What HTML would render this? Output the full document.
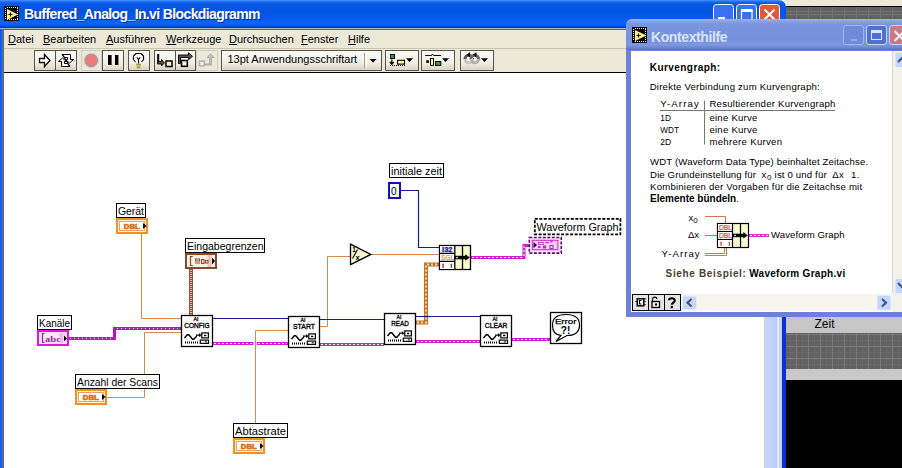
<!DOCTYPE html>
<html><head><meta charset="utf-8">
<style>
*{margin:0;padding:0;box-sizing:border-box}
html,body{width:902px;height:468px;overflow:hidden;background:#fff;font-family:"Liberation Sans",sans-serif}
.a{position:absolute}
#fp{left:786px;top:0;width:116px;height:468px;background:#000}
#title{left:0;top:0;width:786px;height:28px;border-radius:0 7px 0 0;background:linear-gradient(#4a98ff 0,#2c7af6 1px,#0a5ae6 3px,#0054e0 10px,#0658ea 18px,#0c66f8 23px,#0a5cf0 25px,#0044cc 27px,#0038b0 28px)}
#ttext{left:24px;top:6px;color:#fff;font-weight:bold;font-size:14px;letter-spacing:-0.62px;white-space:nowrap;text-shadow:1px 1px 0 #0a2a9a}
#frameL{left:0;top:29px;width:4px;height:440px;background:linear-gradient(90deg,#0d5ef0 0,#0d5ef0 2px,#4a78c8 2px,#6a6a60 3px)}
#frameR{left:782px;top:29px;width:4px;height:440px;background:#0c30d0}
#menubar{left:0;top:28px;width:786px;height:20px;background:#ece9d8;border-top:1px solid #a4acc8;box-shadow:inset 0 1px 0 #6e685a}
#menubar span{position:absolute;top:4px;font-size:11px;color:#000}
#toolbar{left:4px;top:48px;width:778px;height:25px;background:#ece9d8;border-top:1px solid #c9c6b4;border-bottom:1px solid #000}
#canvas{left:4px;top:73px;width:760px;height:395px;background:#fff}
#vscroll{left:764px;top:73px;width:18px;height:395px;background:linear-gradient(90deg,#c8d0e8 0,#c8d0e8 1px,#c6d6fa 1px,#bccdf6 13px,#eef3ff 14px,#eef3ff 15px,#c0d0f8 15px)}
#help{left:626px;top:19px;width:290px;height:298px;background:#7c96df;border-radius:7px 7px 0 0}
#hcontent{left:631px;top:51px;width:280px;height:261px;background:#fff}
</style></head><body>
<div id="fp" class="a"></div>
<div class="a" style="left:786px;top:0;width:116px;height:6px;background:#ece9d8"></div>
<div class="a" style="left:786px;top:6px;width:116px;height:1px;background:#000"></div>
<svg class="a" style="left:786px;top:7px" width="116" height="461">
<defs><pattern id="grid" x="10" y="0" width="12" height="12" patternUnits="userSpaceOnUse"><rect width="12" height="12" fill="#626262"/><path d="M0.5 0 V12 M0 4.5 H12 M0 7.5 H12" stroke="#747474" stroke-width="1"/></pattern>
<pattern id="grid2" x="10" y="3" width="12" height="12" patternUnits="userSpaceOnUse"><rect width="12" height="12" fill="#626262"/><path d="M6.5 0 V12 M0 6.5 H12" stroke="#6a6a6a" stroke-width="1"/><path d="M0.5 0 V12 M0 0.5 H12" stroke="#7a7a7a" stroke-width="1"/></pattern></defs>
<rect x="0" y="0" width="116" height="20" fill="url(#grid)"/>
<rect x="0" y="310" width="116" height="16" fill="#c6c6c6"/>
<text x="28.5" y="321" font-family="Liberation Sans" font-size="12" fill="#000">Zeit</text>
<rect x="0" y="326" width="116" height="36" fill="url(#grid2)"/>
<rect x="0" y="362" width="116" height="11" fill="#c8c8c8"/>
<rect x="0" y="373" width="116" height="88" fill="#000"/>
</svg>

<div id="title" class="a"></div>
<svg class="a" style="left:0;top:0" width="790" height="28">
<rect x="4" y="6" width="15" height="15" fill="#000"/>
<rect x="7" y="7" width="1" height="1" fill="#f0f0f0"/><rect x="7" y="19" width="1" height="1" fill="#f0f0f0"/><rect x="9" y="7" width="1" height="1" fill="#f0f0f0"/><rect x="9" y="19" width="1" height="1" fill="#f0f0f0"/><rect x="11" y="7" width="1" height="1" fill="#f0f0f0"/><rect x="11" y="19" width="1" height="1" fill="#f0f0f0"/><rect x="13" y="7" width="1" height="1" fill="#f0f0f0"/><rect x="13" y="19" width="1" height="1" fill="#f0f0f0"/><rect x="15" y="7" width="1" height="1" fill="#f0f0f0"/><rect x="15" y="19" width="1" height="1" fill="#f0f0f0"/><rect x="17" y="7" width="1" height="1" fill="#f0f0f0"/><rect x="17" y="19" width="1" height="1" fill="#f0f0f0"/><rect x="5" y="8" width="1" height="1" fill="#f0f0f0"/><rect x="17" y="8" width="1" height="1" fill="#f0f0f0"/><rect x="5" y="10" width="1" height="1" fill="#f0f0f0"/><rect x="17" y="10" width="1" height="1" fill="#f0f0f0"/><rect x="5" y="12" width="1" height="1" fill="#f0f0f0"/><rect x="17" y="12" width="1" height="1" fill="#f0f0f0"/><rect x="5" y="14" width="1" height="1" fill="#f0f0f0"/><rect x="17" y="14" width="1" height="1" fill="#f0f0f0"/><rect x="5" y="16" width="1" height="1" fill="#f0f0f0"/><rect x="17" y="16" width="1" height="1" fill="#f0f0f0"/><rect x="5" y="18" width="1" height="1" fill="#f0f0f0"/><rect x="17" y="18" width="1" height="1" fill="#f0f0f0"/>
<path d="M7 9 L18 14.5 L7 20 Z" fill="#f8f088"/>
<path d="M8.5 14.5 H12.5 M10.5 12.5 V16.5" stroke="#000" stroke-width="1.1"/>
<g stroke="#fff" stroke-width="1">
<rect x="713.5" y="4.5" width="20" height="20" rx="3" fill="#3a70f4"/>
<rect x="736.5" y="4.5" width="20" height="20" rx="3" fill="#3a70f4"/>
<rect x="759.5" y="4.5" width="20" height="20" rx="3" fill="#e05a3a"/>
</g>
<rect x="718" y="17" width="7" height="2.5" fill="#fff"/>
<path d="M741.5 10.5 H752 V22 H741.5 Z" fill="none" stroke="#fff" stroke-width="1.2"/>
<rect x="741" y="9" width="11.5" height="3" fill="#fff"/>
<path d="M764.5 9.5 L774.5 19.5 M774.5 9.5 L764.5 19.5" stroke="#fff" stroke-width="2"/>
</svg>
<div id="ttext" class="a">Buffered_Analog_In.vi Blockdiagramm</div>
<div id="menubar" class="a">
<span style="left:8px"><u>D</u>atei</span>
<span style="left:43px"><u>B</u>earbeiten</span>
<span style="left:106px"><u>A</u>usführen</span>
<span style="left:166px"><u>W</u>erkzeuge</span>
<span style="left:229px"><u>D</u>urchsuchen</span>
<span style="left:301px"><u>F</u>enster</span>
<span style="left:348px"><u>H</u>ilfe</span>
</div>
<div id="toolbar" class="a"></div>
<div id="frameL" class="a"></div>
<div id="frameR" class="a"></div>
<div id="canvas" class="a"></div>
<div id="vscroll" class="a"></div>
<svg class="a" style="left:0;top:0" width="902" height="468" id="diag" font-family="Liberation Sans">
<defs>
<symbol id="aiw" viewBox="0 0 32 32" width="32" height="32">
<path d="M3.5 23 L6.3 19.8 L7.8 19.8 L11.5 24.3 L12.8 24.3 L15.8 21" fill="none" stroke="#000" stroke-width="1.4"/>
<path d="M15 20.2 H20.2 M18.7 18.6 V21.8" stroke="#000" stroke-width="1.2"/>
<rect x="20.8" y="17.9" width="6.6" height="5" fill="#fff" stroke="#000" stroke-width="1.2"/>
<rect x="23" y="19.8" width="2.3" height="1.4" fill="#000"/>
<rect x="19.3" y="25.1" width="8.2" height="3.3" fill="#fff" stroke="#000" stroke-width="1.2"/>
<rect x="23.8" y="26.4" width="2.2" height="0.9" fill="#000"/>
<rect x="4" y="26.5" width="1" height="2" fill="#000"/><rect x="6" y="26.5" width="1" height="2" fill="#000"/><rect x="8" y="26.5" width="1" height="2" fill="#000"/><rect x="10" y="26.5" width="1" height="2" fill="#000"/><rect x="12" y="26.5" width="1" height="2" fill="#000"/><rect x="14" y="26.5" width="1" height="2" fill="#000"/><rect x="16" y="26.5" width="1" height="2" fill="#000"/>
</symbol>
</defs>
<!-- wires -->
<g fill="none" stroke-linecap="butt" stroke-linejoin="miter">
<path d="M141.5 234 V318.5 H181" stroke="#d98a48" stroke-width="1"/>
<path d="M107 397.5 H144.5 V332.5 H181" stroke="#d98a48" stroke-width="1"/>
<path d="M255.5 438 V330.5 H288" stroke="#d98a48" stroke-width="1"/>
<path d="M320 326.5 H327.5 V256.5 H350.5" stroke="#d98a48" stroke-width="1"/>
<path d="M371 254.5 H439" stroke="#d98a48" stroke-width="1"/>
<path d="M213 318.5 H288" stroke="#1c1c8c" stroke-width="1.2"/>
<path d="M320 319.5 H384" stroke="#1c1c8c" stroke-width="1.2"/>
<path d="M416 316.5 H480" stroke="#1c1c8c" stroke-width="1.2"/>
<path d="M401 190.5 H418.5 V247.5 H439" stroke="#1c1c8c" stroke-width="1.2"/>
<!-- string beaded -->
<path d="M69 338.5 H114.5 V328.5 H181" stroke="#b414c4" stroke-width="3"/>
<path d="M70 338.5 H113" stroke="#fff" stroke-width="1" stroke-dasharray="1 3"/>
<path d="M117 328.5 H180" stroke="#fff" stroke-width="1" stroke-dasharray="1 3"/>
<!-- task wires -->
<path d="M213 343.5 H253.5 M257 343.5 H288" stroke="#d21ed2" stroke-width="3"/>
<path d="M320 344.5 H384" stroke="#d21ed2" stroke-width="3"/>
<path d="M416 341.5 H480" stroke="#d21ed2" stroke-width="3"/>
<path d="M512 339.5 H550" stroke="#d21ed2" stroke-width="3"/>
<path d="M471 257.5 H524 V245.5 H529" stroke="#d21ed2" stroke-width="3"/>
<g stroke="#fff" stroke-width="1" stroke-dasharray="2 2">
<path d="M214 343.5 H253 M258 343.5 H287"/>
<path d="M321 344.5 H383"/>
<path d="M417 341.5 H479"/>
<path d="M513 339.5 H549"/>
<path d="M472 257.5 H524 M524 256 V245"/>
</g>
<!-- brown cluster wire -->
<path d="M191 268 V316" stroke="#9a5038" stroke-width="4"/>
<path d="M191 268 V316" stroke="#f0e0d8" stroke-width="1.5" stroke-dasharray="1 1"/>
<!-- orange array striped -->
<path d="M416 322.5 H426 V264.5 H439" stroke="#c87028" stroke-width="4"/>
<path d="M417 322.5 H426 V264.5 H438" stroke="#f8dca0" stroke-width="2" stroke-dasharray="2 2"/>
<path d="M422 316.5 H430" stroke="#1c1c8c" stroke-width="1.2"/>
</g>
<!-- AI nodes -->
<g>
<rect x="181.5" y="315.5" width="31" height="31" fill="#fff" stroke="#000" stroke-width="1.3"/>
<use href="#aiw" x="181.0" y="315.0"/>
<text x="193.6" y="321.2" font-size="6" stroke="#000" stroke-width="0.3" textLength="5" lengthAdjust="spacingAndGlyphs">AI</text>
<text x="184.2" y="328.3" font-size="7.6" stroke="#000" stroke-width="0.35" textLength="25.5" lengthAdjust="spacingAndGlyphs">CONFIG</text>
<rect x="288.5" y="316.5" width="31" height="31" fill="#fff" stroke="#000" stroke-width="1.3"/>
<use href="#aiw" x="288.0" y="316.0"/>
<text x="300.6" y="322.2" font-size="6" stroke="#000" stroke-width="0.3" textLength="5" lengthAdjust="spacingAndGlyphs">AI</text>
<text x="293.0" y="329.3" font-size="7.6" stroke="#000" stroke-width="0.35" textLength="22.0" lengthAdjust="spacingAndGlyphs">START</text>
<rect x="384.5" y="313.5" width="31" height="31" fill="#fff" stroke="#000" stroke-width="1.3"/>
<use href="#aiw" x="384.0" y="313.0"/>
<text x="396.6" y="319.2" font-size="6" stroke="#000" stroke-width="0.3" textLength="5" lengthAdjust="spacingAndGlyphs">AI</text>
<text x="391.2" y="326.3" font-size="7.6" stroke="#000" stroke-width="0.35" textLength="17.5" lengthAdjust="spacingAndGlyphs">READ</text>
<rect x="480.5" y="315.5" width="31" height="31" fill="#fff" stroke="#000" stroke-width="1.3"/>
<use href="#aiw" x="480.0" y="315.0"/>
<text x="492.6" y="321.2" font-size="6" stroke="#000" stroke-width="0.3" textLength="5" lengthAdjust="spacingAndGlyphs">AI</text>
<text x="484.8" y="328.3" font-size="7.6" stroke="#000" stroke-width="0.35" textLength="22.5" lengthAdjust="spacingAndGlyphs">CLEAR</text>
</g>
<!-- error node -->
<rect x="550.5" y="312.5" width="31" height="31" fill="#fff" stroke="#000" stroke-width="1.3"/>
<path d="M561 335.3 L556 341.5 L567 335.5 C575 335.5 579.5 332 579.5 325 C579.5 317.5 575 314.5 566 314.5 C557 314.5 552.5 317.5 552.5 325 C552.5 332 555 335.3 561 335.3 Z" fill="#fff" stroke="#000" stroke-width="1.2"/>
<text x="554.9" y="323.9" font-size="7.8" textLength="21.6" lengthAdjust="spacingAndGlyphs" stroke="#000" stroke-width="0.25">Error</text>
<text x="560.7" y="333.5" font-size="10" font-weight="bold" textLength="9.6" lengthAdjust="spacingAndGlyphs">?!</text>
<!-- 1/x -->
<path d="M350.5 244.2 L370.8 254.4 L350.5 264.6 Z" fill="#f8f8d4" stroke="#000" stroke-width="1.3"/>
<text x="352.3" y="251.5" font-size="6.5" font-weight="bold">1</text>
<path d="M352.5 258.5 L357.5 249.5" stroke="#000" stroke-width="1.1"/>
<text x="355.5" y="260" font-size="7.5" font-weight="bold">x</text>
<!-- bundle -->
<rect x="439.5" y="245.5" width="31" height="24" fill="#fafad0" stroke="#000" stroke-width="1.3"/>
<rect x="440" y="246" width="14.5" height="23" fill="#fff"/>
<path d="M454.8 245.5 V269.5 M462.5 245.5 V269.5 M439.5 253.3 H454.5 M439.5 261.3 H454.5" stroke="#000" stroke-width="1.3"/>
<text x="442.1" y="252" font-size="6.5" font-weight="bold" fill="#1a1a9a" stroke="#1a1a9a" stroke-width="0.3" textLength="10.2" lengthAdjust="spacingAndGlyphs">I32</text>
<text x="441.1" y="260.1" font-size="7.2" fill="#d09050" stroke="#d09050" stroke-width="0.2" textLength="13.2" lengthAdjust="spacingAndGlyphs">SGL</text>
<path d="M444 264.3 H443 V267.2 H444 M450.5 264.3 H451.5 V267.2 H450.5" stroke="#7a4a30" stroke-width="1.3" fill="none"/>
<path d="M454.5 255.8 H466 V259.3 H454.5 Z" fill="#000"/>
<rect x="456.3" y="256.8" width="1.5" height="1.5" fill="#fff"/>
<path d="M465.3 254.2 L469.8 257.5 L465.3 260.7 Z" fill="#000"/>
<!-- terminals -->
<!-- Gerät DBL -->
<rect x="117" y="219" width="30" height="14" fill="#fff4d8" stroke="#f39022" stroke-width="2"/>
<rect x="119.5" y="221.5" width="25" height="9" fill="#fff" stroke="#e8a070" stroke-width="1"/>
<text x="123.8" y="229" font-size="8" font-weight="bold" fill="#d86c14" stroke="#d86c14" stroke-width="0.6" textLength="16" lengthAdjust="spacingAndGlyphs">DBL</text>
<path d="M143 223 L146.5 226 L143 229 Z" fill="#000"/>
<!-- Anzahl DBL -->
<rect x="76" y="390" width="30" height="14" fill="#fff4d8" stroke="#f39022" stroke-width="2"/>
<rect x="78.5" y="392.5" width="25" height="9" fill="#fff" stroke="#e8a070" stroke-width="1"/>
<text x="82.8" y="400" font-size="8" font-weight="bold" fill="#d86c14" stroke="#d86c14" stroke-width="0.6" textLength="16" lengthAdjust="spacingAndGlyphs">DBL</text>
<path d="M102 394 L105.5 397 L102 400 Z" fill="#000"/>
<!-- Abtastrate DBL -->
<rect x="234" y="439" width="30" height="14" fill="#fff4d8" stroke="#f39022" stroke-width="2"/>
<rect x="236.5" y="441.5" width="25" height="9" fill="#fff" stroke="#e8a070" stroke-width="1"/>
<text x="240.8" y="449" font-size="8" font-weight="bold" fill="#d86c14" stroke="#d86c14" stroke-width="0.6" textLength="16" lengthAdjust="spacingAndGlyphs">DBL</text>
<path d="M260 443 L263.5 446 L260 449 Z" fill="#000"/>
<!-- Kanäle string -->
<rect x="38" y="331" width="30" height="14" fill="#fce4fc" stroke="#e414e4" stroke-width="2"/>
<rect x="59.5" y="333" width="4" height="10" fill="#f4b8f4"/>
<path d="M44.5 333.5 H42.5 V342.5 H44.5" fill="none" stroke="#8a2a9a" stroke-width="1.2"/>
<text x="45" y="341.5" font-size="9" font-weight="bold" fill="#9a2a9a" font-family="Liberation Serif" textLength="16" lengthAdjust="spacingAndGlyphs">abc</text>
<path d="M64 335.5 L67 338.5 L64 341.5 Z" fill="#000"/>
<!-- Eingabegrenzen cluster -->
<rect x="186" y="254" width="30" height="14" fill="#fbf1ec" stroke="#8a4a2a" stroke-width="2"/>
<rect x="207.5" y="255" width="4" height="12" fill="#ecc8b8"/>
<path d="M192.8 256.5 H190.5 V265.5 H192.8" fill="none" stroke="#8a4a2a" stroke-width="1.2"/>
<rect x="195.5" y="259" width="4" height="2" fill="none" stroke="#8a4a2a" stroke-width="1"/>
<rect x="195" y="262.5" width="5" height="1" fill="#8a4a2a"/>
<rect x="201.5" y="259.5" width="2.5" height="4" fill="none" stroke="#8a4a2a" stroke-width="1.1"/>
<rect x="205.5" y="260.5" width="2.5" height="2.5" fill="none" stroke="#8a4a2a" stroke-width="1"/>
<path d="M212 257.5 L215 261 L212 264.5 Z" fill="#000"/>
<!-- constant 0 -->
<rect x="389" y="183" width="11" height="15" fill="#fff" stroke="#1010c0" stroke-width="2"/>
<text x="391" y="195" font-size="10" fill="#000">0</text>
<!-- waveform graph terminal -->
<rect x="529.3" y="237.5" width="32" height="15.6" fill="#fbe0fb" stroke="#5a1060" stroke-width="1.6" stroke-dasharray="3 1.5"/>
<rect x="532.3" y="240.3" width="25.6" height="9.4" fill="#f6d0f6" stroke="#d020d0" stroke-width="1"/>
<path d="M533.5 242 L537 245 L533.5 248 Z" fill="#000"/>
<rect x="538.5" y="242.5" width="5" height="2" fill="#fff" stroke="#c020c0" stroke-width="0.8"/><rect x="545" y="242.2" width="4" height="1" fill="#c020c0"/><rect x="550.5" y="240.5" width="2" height="2" fill="#d020d0"/>
<rect x="538" y="246" width="2.5" height="2" fill="#d020d0"/><rect x="543" y="245.5" width="3" height="3" fill="#d020d0"/><rect x="550" y="245.5" width="3" height="3" fill="none" stroke="#a030c0" stroke-width="1"/>
<!-- labels -->
<g font-size="11.5" fill="#000">
<rect x="116.5" y="203.5" width="29" height="14" fill="#fff" stroke="#000" stroke-width="1"/>
<text x="118" y="215" textLength="26" lengthAdjust="spacingAndGlyphs">Gerät</text>
<rect x="185.5" y="238.5" width="79" height="14" fill="#fff" stroke="#000" stroke-width="1"/>
<text x="187" y="250" textLength="76.5" lengthAdjust="spacingAndGlyphs">Eingabegrenzen</text>
<rect x="37.5" y="315.5" width="34" height="14" fill="#fff" stroke="#000" stroke-width="1"/>
<text x="39" y="327" textLength="31" lengthAdjust="spacingAndGlyphs">Kanäle</text>
<rect x="75.5" y="374.5" width="84" height="14" fill="#fff" stroke="#000" stroke-width="1"/>
<text x="77" y="386" textLength="81" lengthAdjust="spacingAndGlyphs">Anzahl der Scans</text>
<rect x="233.5" y="423.5" width="54" height="14" fill="#fff" stroke="#000" stroke-width="1"/>
<text x="235" y="435" textLength="51" lengthAdjust="spacingAndGlyphs">Abtastrate</text>
<rect x="389.5" y="163.5" width="54" height="14" fill="#fff" stroke="#000" stroke-width="1"/>
<text x="391" y="175" textLength="51" lengthAdjust="spacingAndGlyphs">initiale zeit</text>
<rect x="534.8" y="218.8" width="85.6" height="15.6" fill="#fff" stroke="#000" stroke-width="1.8" stroke-dasharray="3 1.5"/>
<text x="536.5" y="231" textLength="82" lengthAdjust="spacingAndGlyphs">Waveform Graph</text>
</g>
</svg>
<div class="a" style="left:626px;top:19px;width:290px;height:298px;background:#6f80dc;border-radius:6px 6px 0 0;overflow:hidden">
 <div class="a" style="left:0;top:0;width:290px;height:31px;background:linear-gradient(#9db4f0 0,#8aa3ea 2px,#7b95e0 5px,#7591dd 20px,#7e98e2 26px,#6a84cf 29px,#5a6fae 31px)"></div>
 <div class="a" style="left:25px;top:10px;color:#d8e4fa;font-weight:bold;font-size:14px;white-space:nowrap;letter-spacing:-0.4px">Kontexthilfe</div>
 <div class="a" style="left:217px;top:6px;width:21px;height:20px;border:1px solid #a9bdf0;border-radius:3px;background:#6f8ada;opacity:0.8"></div>
 <div class="a" style="left:225px;top:20px;width:6px;height:2px;background:#93a8e6"></div>
 <div class="a" style="left:240px;top:6px;width:21px;height:20px;border:1px solid #c6d4f8;border-radius:3px;background:#4f71d6"></div>
 <div class="a" style="left:245px;top:11px;width:11px;height:10px;border:1px solid #dbe6ff;border-top-width:3px"></div>
 <div class="a" style="left:263px;top:6px;width:21px;height:20px;border:1px solid #c6d4f8;border-radius:3px;background:#c87a88"></div>
</div>
<div class="a" style="left:631px;top:51px;width:262px;height:261px;background:#fff"></div>
<div class="a" style="left:893px;top:51px;width:9px;height:261px;background:#f3f1e8"></div>
<div class="a" style="left:631px;top:294px;width:262px;height:18px;background:#f6f5f0"></div>
<svg class="a" style="left:0;top:0" width="902" height="468" id="tbsvg">
<defs>
<linearGradient id="btn" x1="0" y1="0" x2="0" y2="1"><stop offset="0" stop-color="#fbfbf7"/><stop offset="0.6" stop-color="#f1efe6"/><stop offset="1" stop-color="#d6d2c2"/></linearGradient>
</defs>
<g stroke="#55554a" stroke-width="1" fill="url(#btn)">
<rect x="34.5" y="50.5" width="21" height="20"/>
<rect x="55.5" y="50.5" width="21" height="20"/>
<rect x="102.5" y="50.5" width="21" height="20"/>
<rect x="128.5" y="50.5" width="21" height="20"/>
<rect x="154.5" y="50.5" width="21" height="20"/>
<rect x="175.5" y="50.5" width="20" height="20"/>
<rect x="221.5" y="50.5" width="160" height="20"/>
<rect x="385.5" y="50.5" width="33" height="20"/>
<rect x="421.5" y="50.5" width="33" height="20"/>
<rect x="460.5" y="50.5" width="33" height="20"/>
</g>
<g stroke="#cfccbd" stroke-width="1" fill="#ebe8dc">
<rect x="81.5" y="50.5" width="20" height="20"/>
<rect x="196.5" y="50.5" width="21" height="20"/>
</g>
<line x1="364.5" y1="53" x2="364.5" y2="68" stroke="#a8a594"/>
<line x1="366.5" y1="53" x2="366.5" y2="68" stroke="#fff"/>
<!-- run arrow -->
<path d="M39.5 58.5 H44.5 V54.5 L50 60.5 L44.5 66.5 V62.5 H39.5 Z" fill="#fff" stroke="#000" stroke-width="1.3"/>
<!-- run continuously -->
<path d="M62.5 54.5 H70.5 V59.5 H73.5 L69.5 63 L65.5 59.5 H67.5 V57.5 H64.5 Z" fill="#fff" stroke="#000" stroke-width="1"/>
<path d="M69.5 66.5 H61.5 V61.5 H58.5 L62.5 58 L66.5 61.5 H64.5 V63.5 H67.5 Z" fill="#fff" stroke="#000" stroke-width="1"/>
<path d="M62 54 L70 66.5" stroke="#000" stroke-width="1.1"/>
<!-- stop -->
<circle cx="91.2" cy="60.4" r="6.3" fill="#ee7a7a" stroke="#a89e96" stroke-width="1.4"/><circle cx="91.2" cy="60.4" r="7.6" fill="none" stroke="#dcd8cc" stroke-width="1"/>
<!-- pause -->
<rect x="108" y="55" width="3.6" height="10" fill="#000"/>
<rect x="115" y="55" width="3.4" height="10" fill="#000"/>
<!-- bulb -->
<path d="M141.5 62 L143.5 59.5 V56 L141 53.5 H136 L133.5 56 V59.5 L135.5 62" fill="#fff" stroke="#000" stroke-width="1.2"/>
<path d="M136.8 57.3 L138.5 59.3 L140.3 57.3 M138.5 59.3 V63.5" stroke="#000" stroke-width="1.1" fill="none"/>
<path d="M136.3 64.3 H140.8 M136.3 66 H140.8 M136.8 67.6 H140.3" stroke="#a89028" stroke-width="1.2"/>
<!-- step into -->
<path d="M158.2 54 V63" stroke="#000" stroke-width="2"/>
<path d="M157.5 61.5 H161.5 V59.5 L164.5 62.8 L161.5 66 V64 H157.5 Z" fill="#555" stroke="#000" stroke-width="0.9"/>
<rect x="166" y="61" width="6" height="5.5" fill="#f8f8c4" stroke="#000" stroke-width="1.5"/>
<!-- step over -->
<path d="M178.5 63.5 V55 H188.5 V52.8 L192.5 56.3 L188.5 59.8 V57.5 H180.5 V63.5 Z" fill="#555" stroke="#000" stroke-width="0.9"/>
<rect x="181.5" y="60.5" width="5.8" height="5.8" fill="#f8f8c4" stroke="#000" stroke-width="1.5"/>
<!-- step out disabled -->
<rect x="199.5" y="61" width="4.8" height="4.8" fill="#f0eee4" stroke="#aeaca0" stroke-width="1.3"/>
<path d="M205 64 H209.5 V57.5 H207 L210.5 53.8 L214 57.5 H211.5 V65 H205" fill="#c8c6bc" stroke="#aeaca0" stroke-width="1"/>
<!-- font dropdown arrow -->
<path d="M369.5 59 H376.5 L373 62.5 Z" fill="#000"/>
<text x="227.5" y="63" font-size="11" fill="#000" font-family="Liberation Sans">13pt Anwendungsschriftart</text>
<!-- align -->
<rect x="390.5" y="54.5" width="4" height="4" fill="#2a9a4a" stroke="#000" stroke-width="1"/>
<path d="M391.8 59.5 V64 M389.8 61.8 L391.8 64.2 L393.8 61.8" stroke="#000" stroke-width="1.2" fill="none"/>
<rect x="397.5" y="60.3" width="7" height="3.8" fill="#ffff90" stroke="#000" stroke-width="1.1"/>
<path d="M390 65.5 H405" stroke="#000" stroke-width="1" stroke-dasharray="1 1"/>
<path d="M406 58.2 H413 L409.5 62 Z" fill="#000"/>
<!-- distribute -->
<path d="M425 55.5 H431.5 L432.5 54 L433.5 55.5 H441" stroke="#000" stroke-width="1" fill="none"/>
<rect x="426.3" y="60.2" width="2.5" height="2.8" fill="#000"/>
<rect x="430.5" y="58.5" width="3" height="6.8" fill="#ffff90" stroke="#000" stroke-width="1"/>
<rect x="435.5" y="61.5" width="5.3" height="4" fill="#2a9a4a" stroke="#000" stroke-width="1"/>
<path d="M442 58.2 H449 L445.5 62 Z" fill="#000"/>
<!-- reorder -->
<path d="M465 59 A3.8 3.8 0 0 0 472.6 59" stroke="#c4c4c4" stroke-width="3" fill="none"/>
<path d="M471 59 A3.8 3.8 0 0 0 478.6 59" stroke="#b0b0b0" stroke-width="3" fill="none"/>
<path d="M465 59 A3.8 3.8 0 0 1 472.6 59" stroke="#5a5a5a" stroke-width="3" fill="none"/>
<path d="M471 59 A3.8 3.8 0 0 1 478.6 59" stroke="#6a6a6a" stroke-width="3" fill="none"/>
<path d="M466.5 52 L470 54.8 L466.5 57.5 Z M473 52 L476.5 54.8 L473 57.5 Z" fill="#111" transform="rotate(180 471.5 54.8)"/>
<path d="M469 62.5 L474 57" stroke="#e8e8e8" stroke-width="0.8"/>
<path d="M481 58.2 H488 L484.5 62 Z" fill="#000"/>
</svg>
<svg class="a" style="left:0;top:0" width="902" height="468" id="helpsvg" font-family="Liberation Sans">
<g font-size="9.6" fill="#000">
<text x="649.7" y="71.2" font-weight="bold" font-size="10" textLength="70.5" lengthAdjust="spacing">Kurvengraph:</text>
<text x="649.7" y="89.9" textLength="170" lengthAdjust="spacing">Direkte Verbindung zum Kurvengraph:</text>
<text x="660.3" y="107.4" textLength="38.5" lengthAdjust="spacing">Y-Array</text>
<text x="709.4" y="107.4" textLength="126" lengthAdjust="spacing">Resultierender Kurvengraph</text>
<text x="660.3" y="120.8" textLength="10.6" lengthAdjust="spacingAndGlyphs">1D</text>
<text x="709.4" y="121" textLength="48" lengthAdjust="spacing">eine Kurve</text>
<text x="660.3" y="132.7" textLength="18.7" lengthAdjust="spacingAndGlyphs">WDT</text>
<text x="709.4" y="133.1" textLength="48" lengthAdjust="spacing">eine Kurve</text>
<text x="660.3" y="144.9" textLength="11" lengthAdjust="spacingAndGlyphs">2D</text>
<text x="709.4" y="144.9" textLength="72.7" lengthAdjust="spacing">mehrere Kurven</text>
<text x="650.1" y="164.8" textLength="218" lengthAdjust="spacing">WDT (Waveform Data Type) beinhaltet Zeitachse.</text>
<text x="650.1" y="178.1" textLength="105.8" lengthAdjust="spacing">Die Grundeinstellung für</text>
<text x="761.6" y="178.1">x</text><text x="767" y="180.3" font-size="8">0</text>
<text x="774.6" y="178.1" textLength="52" lengthAdjust="spacing">ist 0 und für</text>
<text x="832.2" y="178.1" textLength="11.5" lengthAdjust="spacing">Δx</text>
<text x="851" y="178.1" textLength="8.5" lengthAdjust="spacing">1.</text>
<text x="650.1" y="189.6" textLength="212" lengthAdjust="spacing">Kombinieren der Vorgaben für die Zeitachse mit</text>
<text x="650.1" y="202.4"><tspan font-weight="bold" font-size="10">Elemente bündeln</tspan>.</text>
</g>
<line x1="704.5" y1="100.7" x2="704.5" y2="144.5" stroke="#777" stroke-width="1"/>
<line x1="660" y1="110.5" x2="835" y2="110.5" stroke="#777" stroke-width="1"/>
</svg>
<svg class="a" style="left:0;top:0" width="902" height="468" id="help2" font-family="Liberation Sans">
<path d="M894.5 31 L904.5 41 M904.5 31 L894.5 41" stroke="#f4ecf0" stroke-width="2.2"/>
<!-- help icon -->
<rect x="632" y="27" width="15" height="16" fill="#000"/>
<rect x="635" y="28" width="1" height="1" fill="#f0f0f0"/><rect x="635" y="41" width="1" height="1" fill="#f0f0f0"/><rect x="637" y="28" width="1" height="1" fill="#f0f0f0"/><rect x="637" y="41" width="1" height="1" fill="#f0f0f0"/><rect x="639" y="28" width="1" height="1" fill="#f0f0f0"/><rect x="639" y="41" width="1" height="1" fill="#f0f0f0"/><rect x="641" y="28" width="1" height="1" fill="#f0f0f0"/><rect x="641" y="41" width="1" height="1" fill="#f0f0f0"/><rect x="643" y="28" width="1" height="1" fill="#f0f0f0"/><rect x="643" y="41" width="1" height="1" fill="#f0f0f0"/><rect x="645" y="28" width="1" height="1" fill="#f0f0f0"/><rect x="645" y="41" width="1" height="1" fill="#f0f0f0"/><rect x="633" y="29" width="1" height="1" fill="#f0f0f0"/><rect x="645" y="29" width="1" height="1" fill="#f0f0f0"/><rect x="633" y="31" width="1" height="1" fill="#f0f0f0"/><rect x="645" y="31" width="1" height="1" fill="#f0f0f0"/><rect x="633" y="33" width="1" height="1" fill="#f0f0f0"/><rect x="645" y="33" width="1" height="1" fill="#f0f0f0"/><rect x="633" y="35" width="1" height="1" fill="#f0f0f0"/><rect x="645" y="35" width="1" height="1" fill="#f0f0f0"/><rect x="633" y="37" width="1" height="1" fill="#f0f0f0"/><rect x="645" y="37" width="1" height="1" fill="#f0f0f0"/><rect x="633" y="39" width="1" height="1" fill="#f0f0f0"/><rect x="645" y="39" width="1" height="1" fill="#f0f0f0"/>
<path d="M635 30 L646.5 35.5 L635 41 Z" fill="#f8f088"/>
<path d="M636.5 35.5 H640.5 M638.5 33.5 V37.5" stroke="#000" stroke-width="1.1"/>
<!-- diagram -->
<g fill="none" stroke="#e07050" stroke-width="1">
<path d="M705 216.5 H725.5 V223"/>
<path d="M705 235.5 H717"/>
<path d="M705 253.5 H724.5 V247.5 M705 255.5 H726.5 V247.5"/>
</g>
<path d="M749 235.5 H769" stroke="#d030d0" stroke-width="3"/>
<path d="M750 235.5 H768" stroke="#fff" stroke-width="1" stroke-dasharray="2 2"/>
<rect x="717.5" y="223.5" width="31" height="24" fill="#fafad0" stroke="#000" stroke-width="1.2"/>
<rect x="718" y="224" width="14" height="23" fill="#fff"/>
<path d="M732.5 223.5 V247.5 M740.5 223.5 V247.5 M717.5 231.5 H732.5 M717.5 239.5 H732.5" stroke="#000" stroke-width="1.2"/>
<text x="719" y="230.3" font-size="7" fill="#d05838" stroke="#d05838" stroke-width="0.25" textLength="13" lengthAdjust="spacingAndGlyphs">DBL</text>
<text x="719" y="238.3" font-size="7" fill="#d05838" stroke="#d05838" stroke-width="0.25" textLength="13" lengthAdjust="spacingAndGlyphs">DBL</text>
<path d="M722 242.3 H721 V245.2 H722 M728.5 242.3 H729.5 V245.2 H728.5" stroke="#c06040" stroke-width="1.3" fill="none"/>
<path d="M732.5 233.7 H744 V237.2 H732.5 Z" fill="#000"/><rect x="734.3" y="234.7" width="1.5" height="1.5" fill="#fff"/>
<path d="M743.3 232.1 L747.8 235.4 L743.3 238.6 Z" fill="#000"/>
<g font-size="9.6" fill="#000">
<text x="688.5" y="221">x<tspan font-size="8" dy="1.5">0</tspan></text>
<text x="688" y="237.5" textLength="11" lengthAdjust="spacing">Δx</text>
<text x="661.6" y="256.7" textLength="38" lengthAdjust="spacing">Y-Array</text>
<text x="771" y="237.6" textLength="73.5" lengthAdjust="spacing">Waveform Graph</text>
</g>
<text x="665.6" y="277.3" font-size="10" font-weight="bold" fill="#4a4030" textLength="80.3" lengthAdjust="spacing">Siehe Beispiel:</text>
<text x="749.2" y="277.3" font-size="10" font-weight="bold" fill="#000" textLength="96" lengthAdjust="spacing">Waveform Graph.vi</text>
<!-- bottom toolbar -->
<rect x="632.5" y="294.5" width="48" height="16" fill="#e4e4e2" stroke="#000" stroke-width="1"/>
<path d="M648.5 294.5 V310.5 M664.5 294.5 V310.5" stroke="#000" stroke-width="1"/>
<path d="M635 301.5 H646 M640 299 H646" stroke="#203090" stroke-width="0.8"/>
<path d="M640 298.5 H646 M640 304.5 H646" stroke="#d02020" stroke-width="1"/>
<rect x="637.3" y="298.8" width="6.5" height="7" fill="#fff" stroke="#000" stroke-width="1.5"/>
<path d="M641.5 300.5 H639.5 V304 H641.5" fill="none" stroke="#000" stroke-width="1.1"/>
<path d="M652.5 301 V299 A2.3 2.3 0 0 1 657 299" fill="none" stroke="#000" stroke-width="1.2"/>
<rect x="652" y="301.5" width="7.5" height="6" fill="#f0f0f0" stroke="#000" stroke-width="1.3"/>
<rect x="655" y="303.5" width="2" height="2" fill="#000"/>
<path d="M669 300.3 C669 297.8 674.8 297.3 674.8 300.5 C674.8 302.5 671.8 302.6 671.8 304.8" fill="none" stroke="#000" stroke-width="2.1"/><rect x="670.7" y="306" width="2.3" height="2.2" fill="#000"/>
<rect x="682.5" y="296" width="14" height="13.5" rx="2" fill="#c6d6fa" stroke="#e8eefc" stroke-width="1"/>
<path d="M691.5 299 L687.5 302.8 L691.5 306.5" fill="none" stroke="#3a5080" stroke-width="2"/>
<rect x="877" y="295.5" width="14" height="14.5" rx="2" fill="#c6d6fa" stroke="#e8eefc" stroke-width="1"/>
<path d="M882 299 L886 302.8 L882 306.5" fill="none" stroke="#3a5080" stroke-width="2"/>
<line x1="892.5" y1="51" x2="892.5" y2="294" stroke="#d8d6cc" stroke-width="1"/>
<rect x="895" y="52.5" width="10" height="15" rx="2" fill="#c6d6fa" stroke="#e8eefc" stroke-width="1"/>
<path d="M898 62 L903 57" stroke="#3a5080" stroke-width="2"/>
<rect x="895" y="278.5" width="10" height="15" rx="2" fill="#c6d6fa" stroke="#e8eefc" stroke-width="1"/>
<path d="M898 283 L903 288" stroke="#3a5080" stroke-width="2"/>
<rect x="631" y="311" width="262" height="1" fill="#fff"/>
</svg>
</body></html>
